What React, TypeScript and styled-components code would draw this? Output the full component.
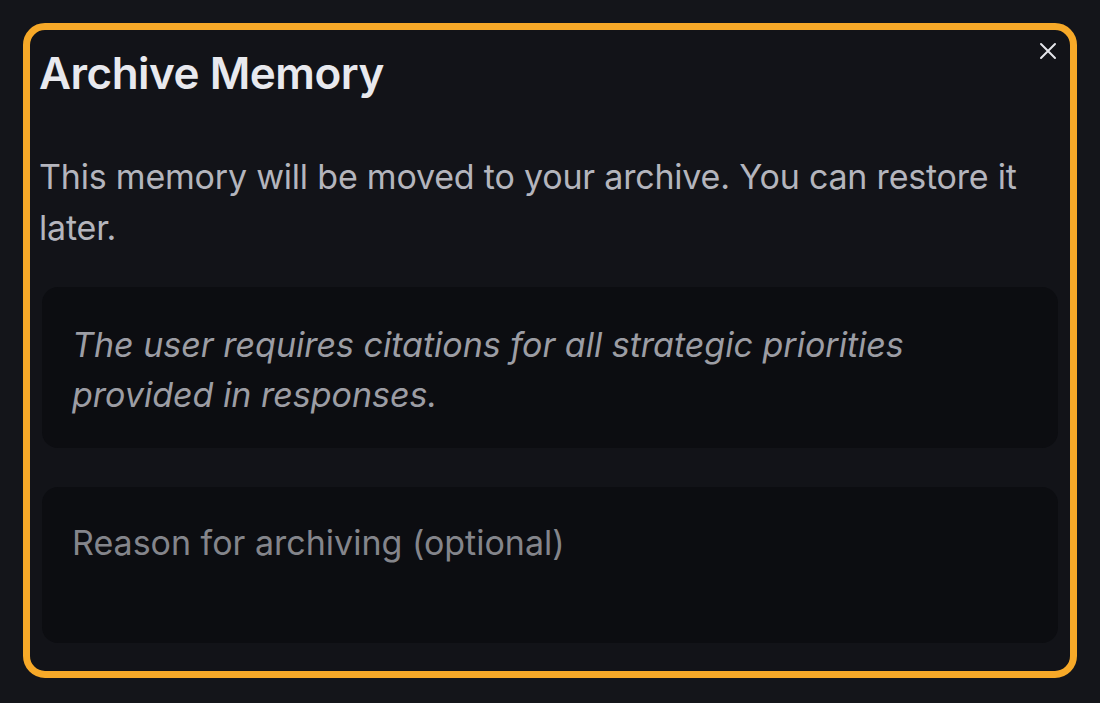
import React from 'react';
import styled, { createGlobalStyle } from 'styled-components';

const GlobalStyle = createGlobalStyle`
  html, body {
    margin: 0;
    padding: 0;
    background: #14151a;
  }
  body {
    font-family: Inter, "Noto Sans", sans-serif;
  }
  * {
    box-sizing: border-box;
  }
`;

const Page = styled.div`
  width: 1100px;
  height: 703px;
  padding: 23px;
  background: #14151a;
`;

const Dialog = styled.div`
  position: relative;
  width: 1054px;
  height: 655px;
  border: 7px solid #f7a928;
  border-radius: 22px;
  background: #121318;
  padding: 13px 12px 0 9px;
  display: flex;
  flex-direction: column;
`;

const CloseButton = styled.button`
  position: absolute;
  top: 10px;
  right: 11px;
  width: 22px;
  height: 22px;
  padding: 0;
  border: none;
  background: transparent;
  color: #e4e5ea;
  display: flex;
  align-items: center;
  justify-content: center;
  cursor: pointer;
`;

const Title = styled.h2`
  margin: 0;
  font-size: 44px;
  line-height: 60px;
  font-weight: 600;
  color: #e8e9ee;
  letter-spacing: -0.5px;
`;

const Description = styled.p`
  margin: 48px 0 0;
  font-size: 34px;
  line-height: 51px;
  color: #b4b5bd;
  letter-spacing: -0.2px;
`;

const Panel = styled.div<{ $height: number }>`
  margin: 0 0 0 3px;
  height: ${({ $height }) => $height}px;
  border-radius: 16px;
  background: #0c0d11;
  padding: 33px 30px;
`;

const Quote = styled(Panel)`
  margin-top: 34px;
  font-size: 34px;
  line-height: 50px;
  font-style: italic;
  color: #9c9da4;
`;

const ReasonField = styled.textarea`
  display: block;
  margin: 39px 0 0 3px;
  height: 156px;
  width: calc(100% - 3px);
  border: none;
  outline: none;
  resize: none;
  border-radius: 16px;
  background: #0c0d11;
  padding: 31px 30px;
  font-family: inherit;
  font-size: 34px;
  line-height: 50px;
  color: #c8c9d0;

  &::placeholder {
    color: #84858b;
  }
`;

const CloseIcon = () => (
  <svg width="20" height="20" viewBox="0 0 20 20" fill="none">
    <path d="M3 3 L17 17 M17 3 L3 17" stroke="currentColor" strokeWidth="2" strokeLinecap="round" />
  </svg>
);

export default function App() {
  return (
    <>
      <GlobalStyle />
      <Page>
        <Dialog>
          <CloseButton aria-label="Close">
            <CloseIcon />
          </CloseButton>
          <Title>Archive Memory</Title>
          <Description>
            This memory will be moved to your archive. You can restore it later.
          </Description>
          <Quote $height={161}>
            The user requires citations for all strategic priorities provided in responses.
          </Quote>
          <ReasonField placeholder="Reason for archiving (optional)" />
        </Dialog>
      </Page>
    </>
  );
}
